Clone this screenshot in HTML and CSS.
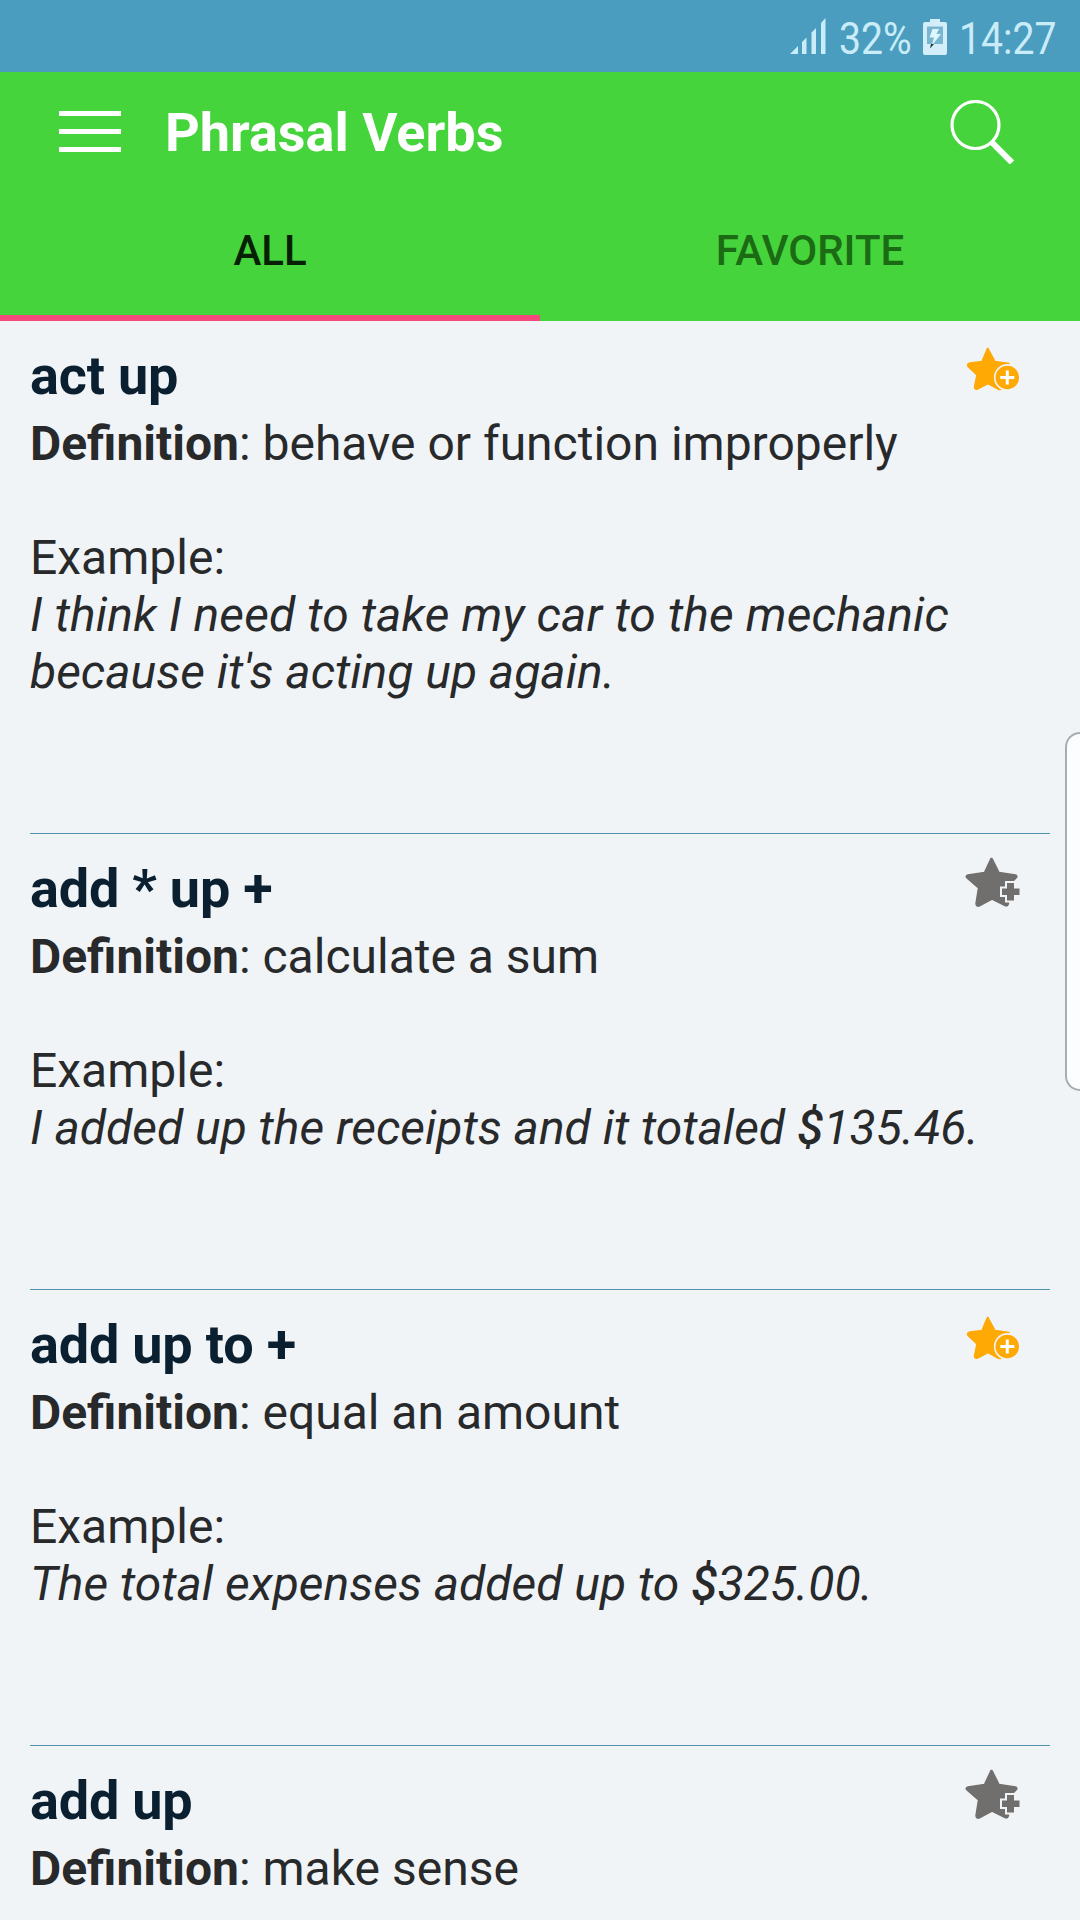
FILE: index.html
```
<!DOCTYPE html>
<html lang="en">
<head>
  <meta charset="UTF-8">
  <meta name="viewport" content="width=device-width, initial-scale=1.0">
  <title>Phrasal Verbs</title>
  <link rel="stylesheet" href="styles.css">
</head>
<body>
  <!-- icons used more than once -->
  <svg class="sprite" width="0" height="0">
    <symbol id="star-on" viewBox="0 0 90 70">
      <path d="M38.500 14.500L45 26.500L59 28.500L50 40L52 53Q51 55.500 48 54L38 48.500L27.500 54Q24.500 55 24.500 52L27 40L18 31.500Q16.500 29 20 28L32 26.500L37 14.500Q38 12 38.500 14.500Z" fill="#ffa905" stroke="#ffa905" stroke-width="1.500" stroke-linejoin="round"/>
      <circle cx="57.300" cy="42.500" r="12.600" fill="#ffa905" stroke="#f1f4f7" stroke-width="1.600"/>
      <path d="M57.300 35.500v14M50.300 42.500h14" stroke="#fff" stroke-width="3" fill="none"/>
    </symbol>
    <symbol id="star-off" viewBox="0 0 90 70">
      <path d="M42 13.500L49 27.500L65.500 30Q68 31 66 33L56 43L58.500 58.500Q58 61.500 55 60.500L42 54L29 61Q26 61.500 26 58.500L28.500 43L17 33Q15 31 18 30L34.500 27.500L41 13.500Z" fill="#716e6e" stroke="#716e6e" stroke-width="1.500" stroke-linejoin="round"/>
      <path d="M57 38h7v5.500h5.500v6.500h-5.500v5.500h-7v-5.500h-5v-6.500h5z" fill="#716e6e" stroke="#f1f4f7" stroke-width="4" paint-order="stroke"/>
    </symbol>
  </svg>

  <div class="status-bar">
    <svg class="signal" viewBox="0 0 36 36">
      <path d="M0 36L8 28V36ZM12 36V24L16.500 19.500V36ZM21.500 36V14.500L26 10V36ZM31 36V5L35.500 0V36Z" fill="#c9ecf8"/>
    </svg>
    <span class="battery-level">32%</span>
    <svg class="battery" viewBox="0 0 24 36">
      <path d="M7 0H17V3H22Q24 3 24 5V34Q24 36 22 36H2Q0 36 0 34V5Q0 3 2 3H7Z" fill="#d3eef8"/>
      <rect x="4" y="7.500" width="16" height="17.500" fill="#78b5d0"/>
      <path d="M9.500 10H16L13.500 15H18L8.500 27L11 18.500H6.500Z" fill="#dff6fc"/>
      <path d="M8 25H11L7 29.500Z" fill="#18333d"/>
    </svg>
    <span class="clock">14:27</span>
  </div>

  <header>
    <div class="toolbar">
      <div class="menu">
        <span></span>
        <span></span>
        <span></span>
      </div>
      <h1>Phrasal Verbs</h1>
      <svg class="search" viewBox="0 0 64 64">
        <circle cx="25.500" cy="25" r="23.500" fill="none" stroke="#fff" stroke-width="3.200"/>
        <path d="M41.500 42L62 62.500" fill="none" stroke="#fff" stroke-width="6"/>
      </svg>
    </div>
    <nav class="tabs">
      <a class="active">ALL</a>
      <a>FAVORITE</a>
    </nav>
  </header>

  <main>
    <article class="verb">
      <h2>act up</h2>
      <svg class="star on"><use href="#star-on"/></svg>
      <p><b>Definition</b>: behave or function improperly</p>
      <p class="example">Example:<br><i><span class="loose">I think I need to take my car to the mechanic</span> because it's acting up again.</i></p>
    </article>

    <article class="verb">
      <h2>add * up +</h2>
      <svg class="star"><use href="#star-off"/></svg>
      <p><b>Definition</b>: calculate a sum</p>
      <p class="example">Example:<br><i>I added up the receipts and it totaled <span class="currency">$</span>135.46.</i></p>
    </article>

    <article class="verb">
      <h2>add up to +</h2>
      <svg class="star on"><use href="#star-on"/></svg>
      <p><b>Definition</b>: equal an amount</p>
      <p class="example">Example:<br><i>The total expenses added up to <span class="currency">$</span>325.00.</i></p>
    </article>

    <article class="verb">
      <h2>add up</h2>
      <svg class="star"><use href="#star-off"/></svg>
      <p><b>Definition</b>: make sense</p>
    </article>
  </main>

  <div class="edge-handle"></div>
</body>
</html>
```
FILE: styles.css
```
:root {
  --status-color: #4a9dbf;
  --primary-color: #45d43b;
  --accent-color: #f5487c;
  --background-color: #f1f4f7;
  --title-color: #0a1f30;
  --text-color: #28292b;
}

* {
  box-sizing: border-box;
}

body {
  font-family: Roboto, sans-serif;
  margin: 0;
  height: 1920px;
  overflow: hidden;
  position: relative;
  background-color: var(--background-color);
  color: var(--text-color);
}

.sprite {
  position: absolute;
}

.status-bar {
  height: 72px;
  padding-left: 790px;
  display: flex;
  align-items: center;
  background-color: var(--status-color);
  color: #c9ecf8;
  font-size: 45px;
  white-space: nowrap;
}

.signal {
  flex: none;
  width: 36px;
  height: 36px;
}

.battery-level,
.clock {
  flex: none;
  position: relative;
  top: 2px;
  transform: scaleX(0.87);
  transform-origin: left;
}

.battery-level {
  width: 71px;
  margin-left: 13px;
}

.battery {
  flex: none;
  width: 24px;
  height: 36px;
  margin: 2px 12px 0 13px;
}

.clock {
  width: 98px;
}

header {
  height: 249px;
  background-color: var(--primary-color);
}

.toolbar {
  height: 120px;
  padding: 0 66px 0 59px;
  display: flex;
  align-items: center;
}

.menu {
  width: 62px;
  height: 41px;
  margin-bottom: 2px;
  display: flex;
  flex-direction: column;
  justify-content: space-between;
}

.menu span {
  height: 5px;
  background-color: #fff;
}

h1 {
  margin: 1px auto 0 44px;
  font-size: 54px;
  line-height: 64px;
  color: #fff;
}

.search {
  width: 64px;
  height: 64px;
}

.tabs {
  height: 129px;
  display: flex;
}

.tabs a {
  flex: 1;
  padding-top: 34px;
  border-bottom: 6px solid transparent;
  text-align: center;
  font-size: 42px;
  font-weight: 500;
  line-height: 50px;
  color: #1b6b14;
}

.tabs a.active {
  color: #071f05;
  border-color: var(--accent-color);
}

.verb {
  position: relative;
  margin: 0 30px;
  padding: 23px 0 133px;
  border-bottom: 1px solid #5293aa;
}

.verb:last-child {
  padding-bottom: 0;
  border: 0;
}

h2 {
  margin: 0 0 7px;
  font-size: 54px;
  line-height: 64px;
  letter-spacing: -0.2px;
  color: var(--title-color);
}

.star {
  position: absolute;
  top: 11px;
  right: 10px;
  width: 90px;
  height: 70px;
}

.star.on {
  top: 14px;
}

p {
  margin: 0;
  font-size: 48px;
  line-height: 57px;
}

.example {
  margin-top: 57px;
}

.loose {
  letter-spacing: 0.13px;
}

.currency {
  font-weight: 500;
}

/* panel handle over the right edge of the screen */
.edge-handle {
  position: absolute;
  top: 732px;
  right: 0;
  width: 15px;
  height: 359px;
  border: 2px solid #a9adb1;
  border-right: 0;
  border-radius: 18px 0 0 18px;
  background-color: #fcfdfe;
}
```
